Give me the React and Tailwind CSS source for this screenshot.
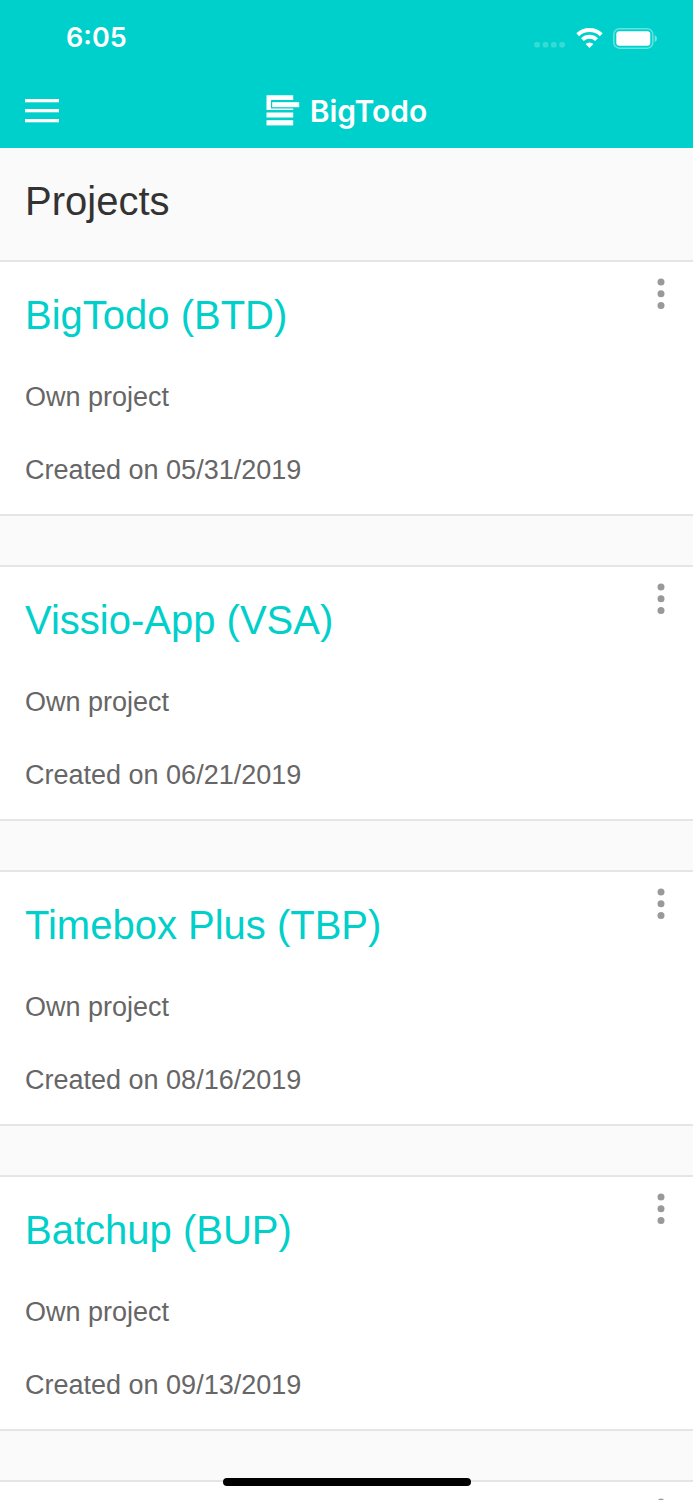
const projects = [
  { id: 1, name: "BigTodo (BTD)", type: "Own project", created: "05/31/2019" },
  { id: 2, name: "Vissio-App (VSA)", type: "Own project", created: "06/21/2019" },
  { id: 3, name: "Timebox Plus (TBP)", type: "Own project", created: "08/16/2019" },
  { id: 4, name: "Batchup (BUP)", type: "Own project", created: "09/13/2019" },
  { id: 5 },
];

function StatusBar() {
  return (
    <div className="flex h-[74px] items-center justify-between pl-[66px] pr-[35px] pt-0.5">
      <span className="text-[27px] leading-8 font-semibold">6:05</span>
      <div className="flex items-center gap-[10px]">
        <svg width="32" height="22" viewBox="0 0 32 22" fill="#fff" fillOpacity="0.22">
          <rect x="0.3" y="15" width="5.6" height="5.6" rx="1.8" />
          <rect x="8.7" y="15" width="5.6" height="5.6" rx="1.8" />
          <rect x="17" y="15" width="5.6" height="5.6" rx="1.8" />
          <rect x="25.3" y="15" width="5.6" height="5.6" rx="1.8" />
        </svg>
        <svg width="27" height="20" viewBox="0 0 27 20" fill="none" stroke="#fff" strokeWidth="4">
          <path d="M1.7 6.8 A17 17 0 0 1 25.3 6.8" />
          <path d="M6.4 11.6 A10.2 10.2 0 0 1 20.6 11.6" />
          <path d="M13.5 20 L9.6 16 A5.6 5.6 0 0 1 17.4 16 Z" fill="#fff" stroke="none" />
        </svg>
        <svg width="45" height="21" viewBox="0 0 45 21">
          <rect x="0.8" y="0.8" width="39" height="19.4" rx="5.5" fill="none" stroke="#fff" strokeOpacity="0.4" strokeWidth="1.5" />
          <rect x="3.3" y="3.3" width="34" height="14.4" rx="3" fill="#fff" />
          <path d="M41.7 7 Q44 8 44 10.5 Q44 13 41.7 14 Z" fill="#fff" fillOpacity="0.45" />
        </svg>
      </div>
    </div>
  );
}

function Logo() {
  return (
    <svg width="34" height="32" viewBox="0 0 34 32" fill="#fff">
      <path d="M0.5 0.3 H27.2 V5 H5 V13.5 H27.2 V15 H0.5 Z" />
      <rect x="6.2" y="7.2" width="27" height="5" />
      <rect x="0.5" y="17.5" width="26.7" height="5" />
      <rect x="0.5" y="25.2" width="26.7" height="5.2" />
    </svg>
  );
}

function NavBar() {
  return (
    <div className="grid h-[74px] grid-cols-[1fr_auto_1fr] items-center px-[25px]">
      <button aria-label="Menu" className="w-[34px]">
        <svg width="34" height="24" viewBox="0 0 34 24" fill="#fff">
          <rect width="34" height="3.3" />
          <rect y="10" width="34" height="3.3" />
          <rect y="20" width="34" height="3.3" />
        </svg>
      </button>
      <div className="flex items-center gap-[10px]">
        <Logo />
        <span className="text-[30px] leading-9 font-semibold">BigTodo</span>
      </div>
    </div>
  );
}

function ProjectCard({ project }) {
  return (
    <article className="relative min-h-[256px] border-y-2 border-[#e5e5e5] bg-white px-[25px] py-6">
      {project.name && (
        <div className="flex flex-col gap-[33px]">
          <h2 className="text-[40px] leading-[58px] text-[#00cfca]">
            <a href="#">{project.name}</a>
          </h2>
          <p>{project.type}</p>
          <p>Created on {project.created}</p>
        </div>
      )}
      <button aria-label="Project options" className="absolute top-4 right-7">
        <svg width="8" height="32" viewBox="0 0 8 32" fill="#999">
          <circle cx="4" cy="4" r="3.5" />
          <circle cx="4" cy="15.7" r="3.5" />
          <circle cx="4" cy="27.4" r="3.5" />
        </svg>
      </button>
    </article>
  );
}

function App() {
  return (
    <div className="flex h-screen flex-col overflow-hidden bg-[#fafafa] font-['Liberation_Sans',Arial,sans-serif] text-[27px] leading-10 text-[#666]">
      <header className="shrink-0 bg-[#00d0cb] font-[Inter,sans-serif] text-white">
        <StatusBar />
        <NavBar />
      </header>
      <main className="flex-1 overflow-y-auto [scrollbar-width:none]">
        <h1 className="px-[25px] pt-6 pb-[30px] text-[40px] leading-[58px] text-[#333]">Projects</h1>
        <div className="flex flex-col gap-[49px]">
          {projects.map((project) => (
            <ProjectCard key={project.id} project={project} />
          ))}
        </div>
      </main>
      <div className="fixed bottom-[14px] left-1/2 h-2 w-[248px] -translate-x-1/2 rounded-full bg-black" />
    </div>
  );
}

export default App;
